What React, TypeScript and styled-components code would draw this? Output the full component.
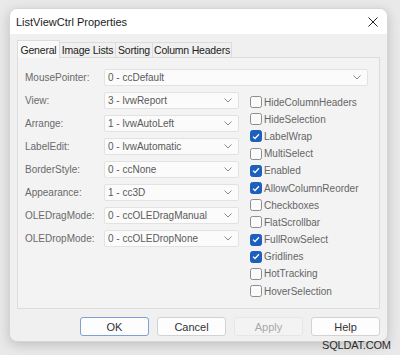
import React from 'react';
import styled, {createGlobalStyle} from 'styled-components';

const GlobalStyle = createGlobalStyle`
    body {
        margin: 0;
        background: #e9e9e9;
        font-family: "Liberation Sans", Arial, sans-serif;
    }
`;

const combos = [
    {label: 'View:', value: '3 - lvwReport'},
    {label: 'Arrange:', value: '1 - lvwAutoLeft'},
    {label: 'LabelEdit:', value: '0 - lvwAutomatic'},
    {label: 'BorderStyle:', value: '0 - ccNone'},
    {label: 'Appearance:', value: '1 - cc3D'},
    {label: 'OLEDragMode:', value: '0 - ccOLEDragManual'},
    {label: 'OLEDropMode:', value: '0 - ccOLEDropNone'},
];

const checks = [
    {label: 'HideColumnHeaders', on: false},
    {label: 'HideSelection', on: false},
    {label: 'LabelWrap', on: true},
    {label: 'MultiSelect', on: false},
    {label: 'Enabled', on: true},
    {label: 'AllowColumnReorder', on: true},
    {label: 'Checkboxes', on: false},
    {label: 'FlatScrollbar', on: false},
    {label: 'FullRowSelect', on: true},
    {label: 'Gridlines', on: true},
    {label: 'HotTracking', on: false},
    {label: 'HoverSelection', on: false},
];

const tabs = [
    {name: 'General', width: 43},
    {name: 'Image Lists', width: 57},
    {name: 'Sorting', width: 38},
    {name: 'Column Headers', width: 80},
];

const Chevron = () => (
    <svg width="8" height="5" viewBox="0 0 8 5">
        <path d="M0.5 0.5 L4 4 L7.5 0.5" fill="none" stroke="#8a8a8a" strokeWidth="1"/>
    </svg>
);

const Combo: React.FunctionComponent<{value: string, width: number}> = ({value, width}) => (
    <ComboBox $width={width}>
        <span>{value}</span>
        <Chevron/>
    </ComboBox>
);

const App: React.FunctionComponent = () => {
    return (
        <Page>
            <GlobalStyle/>
            <Dialog>
                <TitleBar>
                    <span>ListViewCtrl Properties</span>
                    <svg width="10" height="10" viewBox="0 0 10 10">
                        <path d="M0.5 0.5 L9.5 9.5 M9.5 0.5 L0.5 9.5" stroke="#222" strokeWidth="1"/>
                    </svg>
                </TitleBar>
                <Body>
                    <TabStrip>
                        {tabs.map((t, i) => (
                            <Tab key={t.name} $active={i === 0} $width={t.width}>{t.name}</Tab>
                        ))}
                    </TabStrip>
                    <Panel>
                        <FieldRow>
                            <Label>MousePointer:</Label>
                            <Combo value="0 - ccDefault" width={264}/>
                        </FieldRow>
                        <Columns>
                            <ComboList>
                                {combos.map(c => (
                                    <FieldRow key={c.label}>
                                        <Label>{c.label}</Label>
                                        <Combo value={c.value} width={135}/>
                                    </FieldRow>
                                ))}
                            </ComboList>
                            <CheckList>
                                {checks.map(c => (
                                    <CheckRow key={c.label}>
                                        <Box $on={c.on}>
                                            {c.on && (
                                                <svg width="8" height="7" viewBox="0 0 8 7">
                                                    <path d="M1 3.6 L3 5.5 L7 1.3" fill="none" stroke="#fff" strokeWidth="1.3"/>
                                                </svg>
                                            )}
                                        </Box>
                                        <span>{c.label}</span>
                                    </CheckRow>
                                ))}
                            </CheckList>
                        </Columns>
                    </Panel>
                    <ButtonRow>
                        <Button $variant="default">OK</Button>
                        <Button>Cancel</Button>
                        <Button $variant="disabled">Apply</Button>
                        <Button>Help</Button>
                    </ButtonRow>
                </Body>
            </Dialog>
            <Watermark>SQLDAT.COM</Watermark>
        </Page>
    );
}

const Page = styled.div`
    position: relative;
    height: 355px;
    box-sizing: border-box;
    padding: 8px 0 0 9px;
`;

const Dialog = styled.div`
    width: 379px;
    height: 334px;
    box-sizing: border-box;
    display: flex;
    flex-direction: column;
    background: #f0f0f0;
    border: 1px solid #d6d6d6;
    border-radius: 8px;
    overflow: hidden;
    box-shadow: 0 3px 12px rgba(0, 0, 0, 0.18);
`;

const TitleBar = styled.div`
    height: 25px;
    display: flex;
    align-items: center;
    justify-content: space-between;
    padding: 0 9px 0 6px;
    background: #ffffff;
    font-size: 11px;
    color: #1b1b1b;
`;

const Body = styled.div`
    flex: 1;
    display: flex;
    flex-direction: column;
    padding: 6px 7px 0 7px;
`;

const TabStrip = styled.div`
    display: flex;
    align-items: flex-end;
    height: 17px;
`;

const Tab = styled.div<{$active?: boolean, $width: number}>`
    width: ${p => p.$width}px;
    height: ${p => p.$active ? 18 : 15}px;
    box-sizing: border-box;
    display: flex;
    align-items: center;
    justify-content: center;
    white-space: nowrap;
    font-size: 10.5px;
    letter-spacing: -0.2px;
    color: #222;
    background: ${p => p.$active ? '#f9f9f9' : '#f0f0f0'};
    border: 1px solid #dcdcdc;
    border-bottom: none;
    margin-left: ${p => p.$active ? 0 : -1}px;
    margin-bottom: ${p => p.$active ? -1 : 0}px;
    position: relative;
    z-index: ${p => p.$active ? 1 : 0};
`;

const Panel = styled.div`
    height: 252px;
    box-sizing: border-box;
    padding: 11px 11px 0 7px;
    background: #f3f3f3;
    border: 1px solid #dcdcdc;
`;

const FieldRow = styled.div`
    display: flex;
    align-items: center;
`;

const Label = styled.div`
    width: 79px;
    font-size: 10px;
    color: #6a6a6a;
`;

const ComboBox = styled.div<{$width: number}>`
    width: ${p => p.$width}px;
    height: 17px;
    box-sizing: border-box;
    display: flex;
    align-items: center;
    justify-content: space-between;
    padding: 0 6px 0 3px;
    background: #fbfbfb;
    border: 1px solid #e2e2e2;
    border-radius: 2px;
    font-size: 10px;
    color: #5a5a5a;
`;

const Columns = styled.div`
    display: flex;
    gap: 11px;
    margin-top: 6px;
`;

const ComboList = styled.div`
    display: flex;
    flex-direction: column;
    gap: 6px;
`;

const CheckList = styled.div`
    display: flex;
    flex-direction: column;
    margin-top: 1.5px;
`;

const CheckRow = styled.div`
    height: 17.2px;
    display: flex;
    align-items: center;
    gap: 2px;
    font-size: 10px;
    color: #666;
`;

const Box = styled.div<{$on?: boolean}>`
    width: 12px;
    height: 12px;
    box-sizing: border-box;
    display: flex;
    align-items: center;
    justify-content: center;
    border-radius: 2.5px;
    border: 1px solid ${p => p.$on ? '#1d5fbd' : '#8c8c8c'};
    background: ${p => p.$on ? '#1d5fbd' : '#fafafa'};
`;

const ButtonRow = styled.div`
    display: flex;
    justify-content: flex-end;
    gap: 8px;
    margin-top: 8px;
`;

const Button = styled.div<{$variant?: 'default' | 'disabled'}>`
    width: 69px;
    height: 19px;
    box-sizing: border-box;
    display: flex;
    align-items: center;
    justify-content: center;
    font-size: 11px;
    border-radius: 3px;
    color: ${p => p.$variant === 'disabled' ? '#a8a8a8' : '#333'};
    background: ${p => p.$variant === 'disabled' ? '#f3f3f3' : '#fdfdfd'};
    border: 1px solid ${p => p.$variant === 'default' ? '#7f9fd6' : p.$variant === 'disabled' ? '#e6e6e6' : '#d2d2d2'};
`;

const Watermark = styled.div`
    position: absolute;
    left: 322px;
    top: 339px;
    font-size: 11px;
    color: #2a2a2a;
    letter-spacing: -0.2px;
`;

export default App;
